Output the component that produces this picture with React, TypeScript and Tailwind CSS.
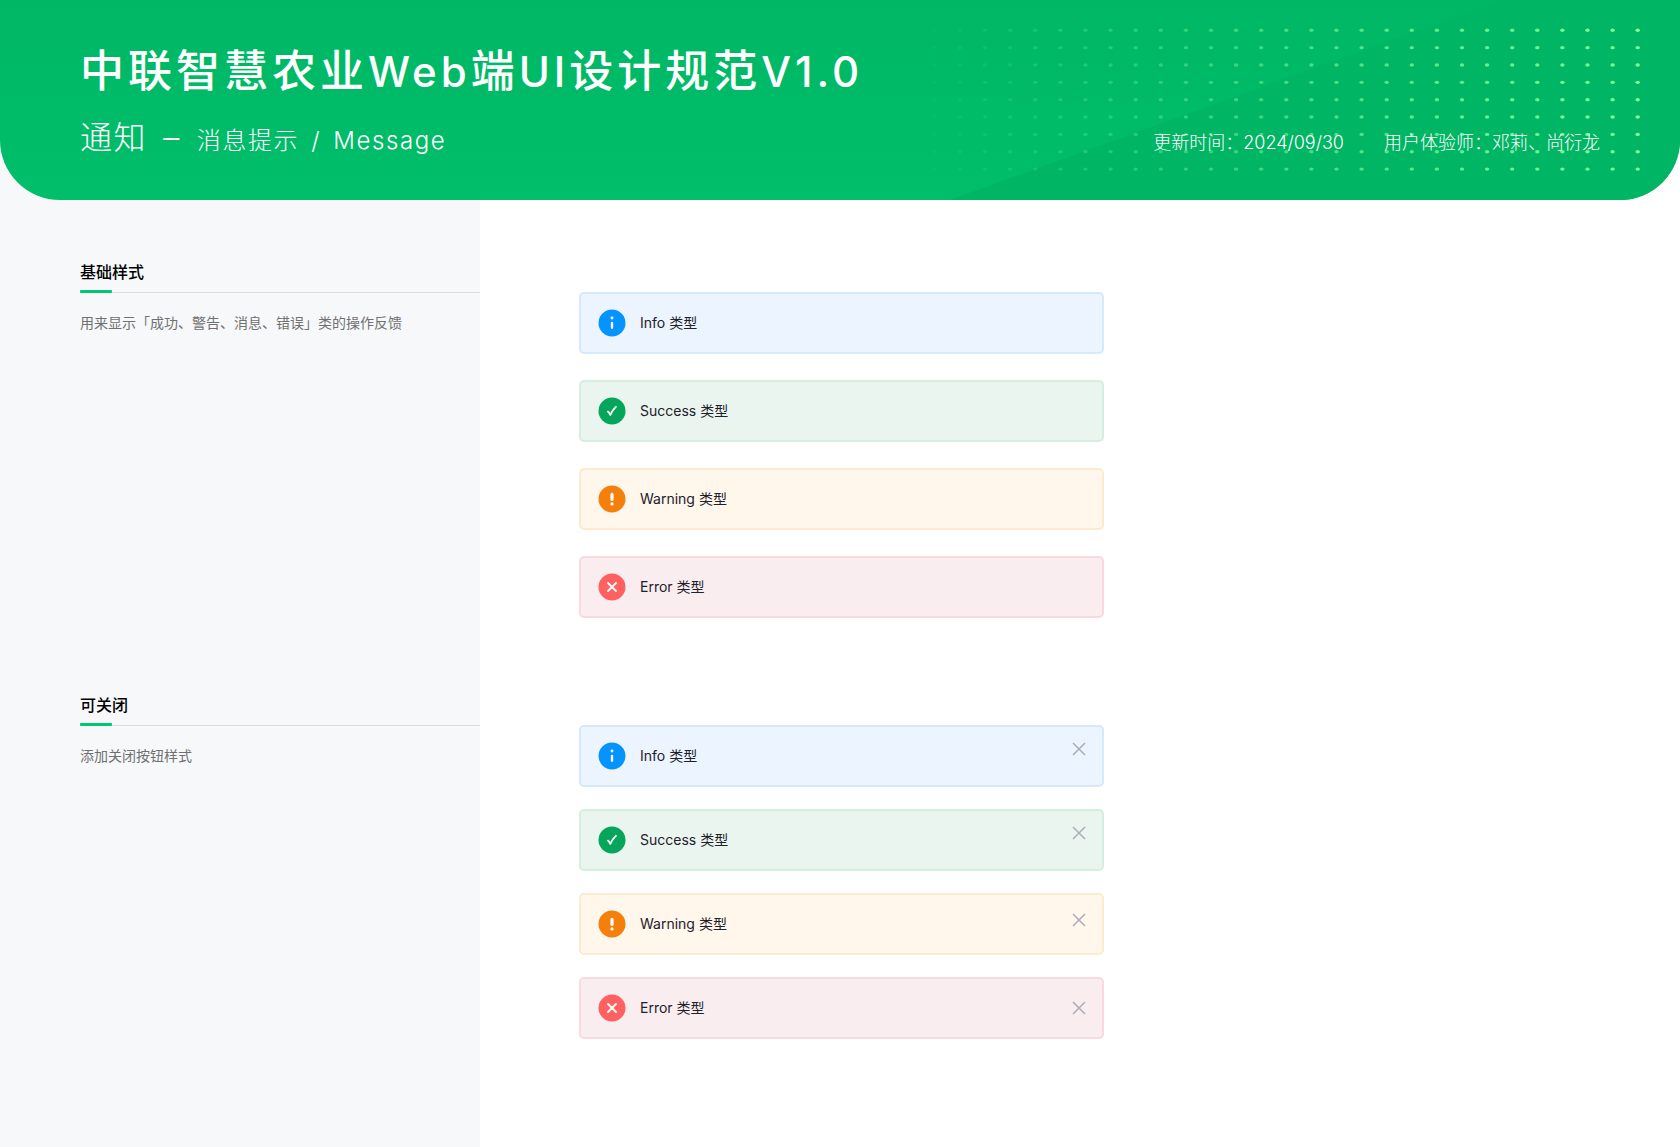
import React from "react";

type Kind = "info" | "success" | "warning" | "error";

const styles: Record<Kind, { label: string; box: string; disc: string }> = {
  info: { label: "Info 类型", box: "bg-[#ecf5ff] border-[#d5e8fc]", disc: "#0594ff" },
  success: { label: "Success 类型", box: "bg-[#ebf5f0] border-[#d5eee1]", disc: "#05a65b" },
  warning: { label: "Warning 类型", box: "bg-[#fff6ec] border-[#fdebcf]", disc: "#f57f0b" },
  error: { label: "Error 类型", box: "bg-[#faedf0] border-[#f9dae0]", disc: "#ff6161" },
};

function KindIcon({ kind }: { kind: Kind }) {
  return (
    <svg className="size-7 shrink-0" viewBox="0 0 28 28" fill="none" aria-hidden="true">
      <circle cx="14" cy="14" r="13.5" fill={styles[kind].disc} />
      {kind === "info" && (
        <>
          <circle cx="14" cy="9" r="1.4" fill="#fff" />
          <path d="M14 13.8V18.8" stroke="#fff" strokeWidth="2.3" strokeLinecap="round" />
        </>
      )}
      {kind === "success" && (
        <path d="M9.9 14.6c1.1.8 1.8 1.9 2.4 3.3 1.2-3.2 3.2-5.9 5.6-8.1" stroke="#fff" strokeWidth="1.8" strokeLinecap="round" strokeLinejoin="round" />
      )}
      {kind === "warning" && (
        <>
          <path d="M14 9.4V14.4" stroke="#fff" strokeWidth="3.2" strokeLinecap="round" />
          <circle cx="14" cy="18.9" r="1.6" fill="#fff" />
        </>
      )}
      {kind === "error" && (
        <path d="M10 10l8 8M18 10l-8 8" stroke="#fff" strokeWidth="1.8" strokeLinecap="round" />
      )}
    </svg>
  );
}

function Message({ kind, closeClass }: { kind: Kind; closeClass?: string }) {
  const s = styles[kind];
  return (
    <div role="status" className={`flex h-[62px] items-center rounded-[5px] border-2 pl-[17px] pr-4 ${s.box}`}>
      <KindIcon kind={kind} />
      <span className="ml-[14px] flex-1 text-sm leading-5 text-[#1d2129]">{s.label}</span>
      {closeClass && (
        <button type="button" aria-label="关闭" className={`text-[#a9adb5] ${closeClass}`}>
          <svg className="size-3.5" viewBox="0 0 14 14" fill="none" stroke="currentColor" strokeWidth="1.5" aria-hidden="true">
            <path d="M1 1l12 12M13 1L1 13" />
          </svg>
        </button>
      )}
    </div>
  );
}

function Intro({ title, text }: { title: string; text: string }) {
  return (
    <div className="pl-20">
      <h2 className="text-base leading-6 font-medium text-black">{title}</h2>
      <div className="mt-1.5 flex h-[3px] items-end">
        <span className="h-[3px] w-8 rounded-[1px] bg-[#00c770]" />
        <span className="h-px flex-1 bg-[#dcdde0]" />
      </div>
      <p className="mt-5 text-sm leading-5 text-[#707070]">{text}</p>
    </div>
  );
}

const columns = Array.from({ length: 30 }, (_, i) => i);
const rows = Array.from({ length: 9 }, (_, i) => i);

function HeaderArt() {
  return (
    <svg className="absolute inset-y-0 right-0 h-full w-[800px]" viewBox="0 0 800 200" aria-hidden="true">
      <path d="M70 200L622 0H800V200Z" fill="#00b564" />
      {columns.map((c) =>
        rows.map((r) => (
          <ellipse key={`${c}-${r}`} cx={757.7 - c * 25.1} cy={30.3 + r * 17.35} rx="2.2" ry="1.7" fill="#7dff9a" opacity={Math.max(0, 1 - c / 29.5)} />
        )),
      )}
    </svg>
  );
}

const kinds: Kind[] = ["info", "success", "warning", "error"];
const closePlacement: Record<Kind, string> = {
  info: "self-start mt-[15px]",
  success: "self-start mt-[15px]",
  warning: "self-start mt-[18px]",
  error: "self-center",
};

export default function App() {
  return (
    <div className="flex min-h-screen flex-col bg-[linear-gradient(to_right,#f7f8fa_480px,#fff_480px)] font-['Inter','Noto_Sans_CJK_SC',sans-serif]">
      <header className="relative h-[200px] overflow-hidden rounded-b-[60px] bg-linear-to-b from-[#00b765] to-[#00be6a] text-white">
        <HeaderArt />
        <div className="relative px-20 pt-[41px]">
          <h1 className="text-[44px] leading-[60px] font-medium tracking-[4px]">
            中联智慧农业<span className="text-[42px]">Web</span>端<span className="text-[42px]">UI</span>设计规范
            <span className="text-[42px]">V1.0</span>
          </h1>
          <div className="mt-3 flex items-baseline justify-between">
            <p className="flex items-baseline font-light tracking-widest">
              <span className="text-[32px] leading-[48px]">通知</span>
              <span className="ml-4 mr-4 text-[32px] leading-[48px]">–</span>
              <span className="text-2xl">消息提示</span>
              <span className="mx-3 text-2xl">/</span>
              <span className="text-2xl">Message</span>
            </p>
            <p className="flex gap-10 text-lg font-light">
              <span>更新时间：2024/09/30</span>
              <span>用户体验师：邓莉、尚衍龙</span>
            </p>
          </div>
        </div>
      </header>
      <main>
        <section className="mt-[60px] grid grid-cols-[480px_1fr]">
          <Intro title="基础样式" text="用来显示「成功、警告、消息、错误」类的操作反馈" />
          <div className="ml-[99px] mt-8 flex w-[525px] flex-col gap-[26px]">
            {kinds.map((k) => (
              <Message key={k} kind={k} />
            ))}
          </div>
        </section>
        <section className="mt-[75px] grid grid-cols-[480px_1fr]">
          <Intro title="可关闭" text="添加关闭按钮样式" />
          <div className="ml-[99px] mt-8 flex w-[525px] flex-col gap-[22px]">
            {kinds.map((k) => (
              <Message key={k} kind={k} closeClass={closePlacement[k]} />
            ))}
          </div>
        </section>
      </main>
    </div>
  );
}
